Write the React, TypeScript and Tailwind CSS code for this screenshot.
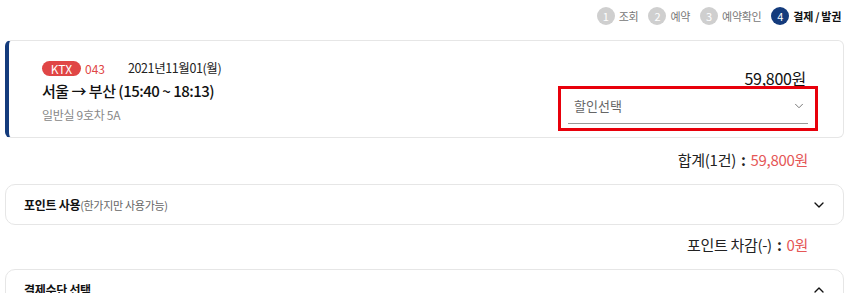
import React from 'react';
import { ChevronDown, ChevronUp } from 'lucide-react';

const steps = [
  { n: 1, label: '조회' },
  { n: 2, label: '예약' },
  { n: 3, label: '예약확인' },
  { n: 4, label: '결제 / 발권', active: true },
];

const Steps: React.FC = () => (
  <div className="flex justify-end items-center h-[32px] mb-[8px] pr-[3px] gap-[10px]">
    {steps.map((s) => (
      <div key={s.n} className="flex items-center gap-[4px]">
        <span
          className={`w-[18px] h-[18px] rounded-full flex items-center justify-center text-[11px] text-white ${
            s.active ? 'bg-[#143b7c]' : 'bg-[#cfcfcf]'
          }`}
        >
          {s.n}
        </span>
        <span className={`text-[11px] tracking-[-0.3px] ${s.active ? 'font-bold text-[#111]' : 'text-[#777]'}`}>
          {s.label}
        </span>
      </div>
    ))}
  </div>
);

const App: React.FC = () => {
  return (
    <div
      className="w-[851px] h-[293px] overflow-hidden bg-white pl-[5px] pr-[7px]"
      style={{ fontFamily: '"Noto Sans CJK KR", "Noto Sans", sans-serif' }}
    >
      <Steps />

      {/* 승차권 카드 */}
      <div className="h-[98px] border border-[#e6e6e6] border-l-[4px] border-l-[#143b7c] rounded-[6px] flex justify-between">
        <div className="pl-[33px] pt-[20px]">
          <div className="flex items-center h-[15px]">
            <span className="bg-[#e04646] text-white text-[12px] leading-none rounded-full w-[39px] h-[15px] flex items-center justify-center">
              KTX
            </span>
            <span className="text-[#e04646] text-[12px] ml-[4px]">043</span>
            <span className="text-[#222] text-[12.5px] tracking-[-0.4px] ml-[23px]">2021년11월01(월)</span>
          </div>
          <div className="text-[15px] font-medium text-[#111] mt-[4px] leading-[22px] tracking-[-0.5px]">
            서울 → 부산 (15:40 ~ 18:13)
          </div>
          <div className="text-[12px] text-[#888] mt-[4px] tracking-[-0.3px]">일반실 9호차 5A</div>
        </div>
        <div className="flex flex-col items-end pr-[25px] pt-[26px]">
          <div className="text-[16px] text-[#111] leading-[22px] mr-[12px] tracking-[-0.3px]">59,800원</div>
          <div className="w-[260px] h-[45px] border-[3px] border-[#e8000b] px-[7px] -mt-[3px]">
            <div className="h-[35px] border-b border-[#999] flex items-center justify-between pl-[6px] pr-[2px]">
              <span className="text-[13px] text-[#666]">할인선택</span>
              <ChevronDown className="w-[14px] h-[14px] text-[#666]" strokeWidth={1.5} />
            </div>
          </div>
        </div>
      </div>

      <div className="flex justify-end items-center h-[40px] pr-[36px] pt-[5px] text-[15px] tracking-[-0.3px] text-[#222]">
        합계(1건)
        <span className="font-bold mx-[5px]">:</span>
        <span className="text-[#e55757]">59,800원</span>
      </div>

      {/* 포인트 사용 */}
      <div className="mt-[6px] h-[41px] border border-[#e6e6e6] rounded-[10px] flex items-center justify-between pl-[18px] pr-[16px]">
        <div className="text-[12px] text-[#111] tracking-[-0.3px]">
          <span className="font-bold">포인트 사용</span>
          <span className="text-[11px] text-[#666]">(한가지만 사용가능)</span>
        </div>
        <ChevronDown className="w-[16px] h-[16px] text-[#111]" strokeWidth={2} />
      </div>

      <div className="flex justify-end items-center h-[40px] pr-[36px] text-[15px] tracking-[-0.3px] text-[#222]">
        포인트 차감(-)
        <span className="font-bold mx-[5px]">:</span>
        <span className="text-[#e55757]">0원</span>
      </div>

      {/* 결제수단 선택 */}
      <div className="mt-[4px] h-[41px] border border-[#e6e6e6] rounded-[10px] flex items-center justify-between pl-[18px] pr-[16px]">
        <span className="text-[12px] font-bold text-[#111] tracking-[-0.3px]">결제수단 선택</span>
        <ChevronUp className="w-[16px] h-[16px] text-[#111]" strokeWidth={2} />
      </div>
    </div>
  );
};

export default App;
